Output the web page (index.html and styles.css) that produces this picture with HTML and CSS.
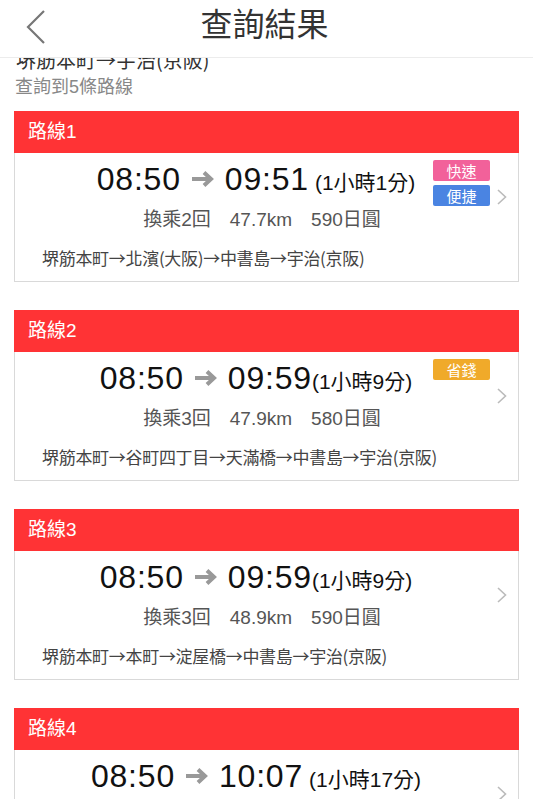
FILE: index.html
```html
<!DOCTYPE html>
<html lang="zh-Hant">
<head>
<meta charset="utf-8">
<title>查詢結果</title>
<link rel="stylesheet" href="styles.css">
</head>
<body>
<header class="nav">
  <svg class="back" width="20" height="34" viewBox="0 0 20 34"><polyline points="18,1 2,17 18,33" fill="none" stroke="#777" stroke-width="2.2" stroke-linejoin="miter"/></svg>
  <h1 class="nav-title">查詢結果</h1>
</header>
<main class="content">
  <div class="route-title">堺筋本町→宇治(京阪)</div>
  <div class="count">查詢到5條路線</div>

  <section class="card">
    <div class="card-head">路線1</div>
    <div class="card-body">
      <div class="top">
        <div class="main">
          <div class="time-row"><span class="t">08:50</span><svg class="arr" width="24" height="16" viewBox="0 0 24 16"><path d="M1 8H20M13 1.5L20 8L13 14.5" fill="none" stroke="#999" stroke-width="4"/></svg><span class="t">09:51</span><span class="dur spaced">(1小時1分)</span></div>
          <div class="detail"><span>換乘2回</span><span>47.7km</span><span>590日圓</span></div>
        </div>
        <div class="badges"><span class="badge pink">快速</span><span class="badge blue">便捷</span></div>
        <svg class="chev" width="10" height="16" viewBox="0 0 10 16"><polyline points="1,1 8.5,8 1,15" fill="none" stroke="#bbb" stroke-width="1.6"/></svg>
      </div>
      <div class="stations">堺筋本町→北濱(大阪)→中書島→宇治(京阪)</div>
    </div>
  </section>

  <section class="card">
    <div class="card-head">路線2</div>
    <div class="card-body">
      <div class="top">
        <div class="main">
          <div class="time-row"><span class="t">08:50</span><svg class="arr" width="24" height="16" viewBox="0 0 24 16"><path d="M1 8H20M13 1.5L20 8L13 14.5" fill="none" stroke="#999" stroke-width="4"/></svg><span class="t">09:59</span><span class="dur">(1小時9分)</span></div>
          <div class="detail"><span>換乘3回</span><span>47.9km</span><span>580日圓</span></div>
        </div>
        <div class="badges"><span class="badge orange">省錢</span></div>
        <svg class="chev" width="10" height="16" viewBox="0 0 10 16"><polyline points="1,1 8.5,8 1,15" fill="none" stroke="#bbb" stroke-width="1.6"/></svg>
      </div>
      <div class="stations">堺筋本町→谷町四丁目→天滿橋→中書島→宇治(京阪)</div>
    </div>
  </section>

  <section class="card">
    <div class="card-head">路線3</div>
    <div class="card-body">
      <div class="top">
        <div class="main">
          <div class="time-row"><span class="t">08:50</span><svg class="arr" width="24" height="16" viewBox="0 0 24 16"><path d="M1 8H20M13 1.5L20 8L13 14.5" fill="none" stroke="#999" stroke-width="4"/></svg><span class="t">09:59</span><span class="dur">(1小時9分)</span></div>
          <div class="detail"><span>換乘3回</span><span>48.9km</span><span>590日圓</span></div>
        </div>
        <div class="badges"></div>
        <svg class="chev" width="10" height="16" viewBox="0 0 10 16"><polyline points="1,1 8.5,8 1,15" fill="none" stroke="#bbb" stroke-width="1.6"/></svg>
      </div>
      <div class="stations">堺筋本町→本町→淀屋橋→中書島→宇治(京阪)</div>
    </div>
  </section>

  <section class="card">
    <div class="card-head">路線4</div>
    <div class="card-body">
      <div class="top">
        <div class="main">
          <div class="time-row"><span class="t">08:50</span><svg class="arr" width="24" height="16" viewBox="0 0 24 16"><path d="M1 8H20M13 1.5L20 8L13 14.5" fill="none" stroke="#999" stroke-width="4"/></svg><span class="t">10:07</span><span class="dur spaced">(1小時17分)</span></div>
          <div class="detail"><span>換乘2回</span><span>47.7km</span><span>590日圓</span></div>
        </div>
        <div class="badges"></div>
        <svg class="chev" width="10" height="16" viewBox="0 0 10 16"><polyline points="1,1 8.5,8 1,15" fill="none" stroke="#bbb" stroke-width="1.6"/></svg>
      </div>
    </div>
  </section>
</main>
</body>
</html>
```
FILE: styles.css
```css
* { box-sizing: border-box; }
html, body { margin: 0; padding: 0; background: #fff; }
body {
  font-family: "Liberation Sans", "Noto Sans CJK TC", sans-serif;
  color: #333;
  height: 799px;
  overflow: hidden;
  display: flex;
  flex-direction: column;
}
.nav {
  height: 58px;
  flex: none;
  display: flex;
  align-items: center;
  justify-content: center;
  border-bottom: 1px solid #ececec;
  padding: 0 26px;
}
.back { flex: none; margin-right: auto; margin-top: -4px; }
.nav-title {
  font-family: "Noto Sans CJK TC", sans-serif;
  font-weight: 400;
  font-size: 32px;
  color: #333;
  line-height: 40px;
  margin: -14px auto 0 0;
  position: relative;
  left: -12px;
}
.content {
  flex: 1;
  overflow: hidden;
  padding: 0 14px;
}
.route-title {
  margin: -12px 0 0 2px;
  font-family: "Noto Sans CJK TC", sans-serif;
  font-size: 20px;
  line-height: 28px;
  color: #333;
}
.count {
  margin: 0 0 11px 1px;
  font-size: 18px;
  line-height: 26px;
  color: #888;
}
.card { margin-bottom: 28px; }
.card-head {
  background: #ff3335;
  color: #fff;
  height: 42px;
  line-height: 42px;
  font-size: 19px;
  padding-left: 14px;
}
.card-body {
  border: 1px solid #d9d9d9;
  border-top: none;
  padding: 7px 11px 11px 0;
}
.top { display: flex; align-items: flex-start; }
.main { flex: 1; padding-left: 68px; }
.time-row {
  display: flex;
  align-items: baseline;
  justify-content: center;
  color: #111;
  height: 38px;
}
.t { font-size: 32px; line-height: 38px; letter-spacing: 0.8px; }
.arr { margin: 0 10px 0 10px; align-self: center; }
.dur { font-size: 21px; }
.dur.spaced { margin-left: 6px; }
.detail {
  display: flex;
  justify-content: center;
  gap: 19px;
  font-size: 19px;
  line-height: 26px;
  color: #555;
  margin-top: 9px;
  padding-left: 12px;
}
.badges {
  width: 57px;
  flex: none;
  display: flex;
  flex-direction: column;
  gap: 4px;
  margin-left: 4px;
}
.badge {
  height: 21px;
  line-height: 21px;
  border-radius: 2px;
  color: #fff;
  font-size: 15px;
  text-align: center;
  font-family: "Noto Sans CJK TC", sans-serif;
}
.pink { background: #f2619a; }
.blue { background: #4a84e2; }
.orange { background: #f0aa2a; }
.chev { flex: none; margin: 29px 0 0 7px; }
.stations {
  margin-top: 13px;
  padding-left: 27px;
  font-family: "Noto Sans CJK TC", sans-serif;
  font-size: 17px;
  line-height: 24px;
  letter-spacing: -0.3px;
  color: #444;
}
```
